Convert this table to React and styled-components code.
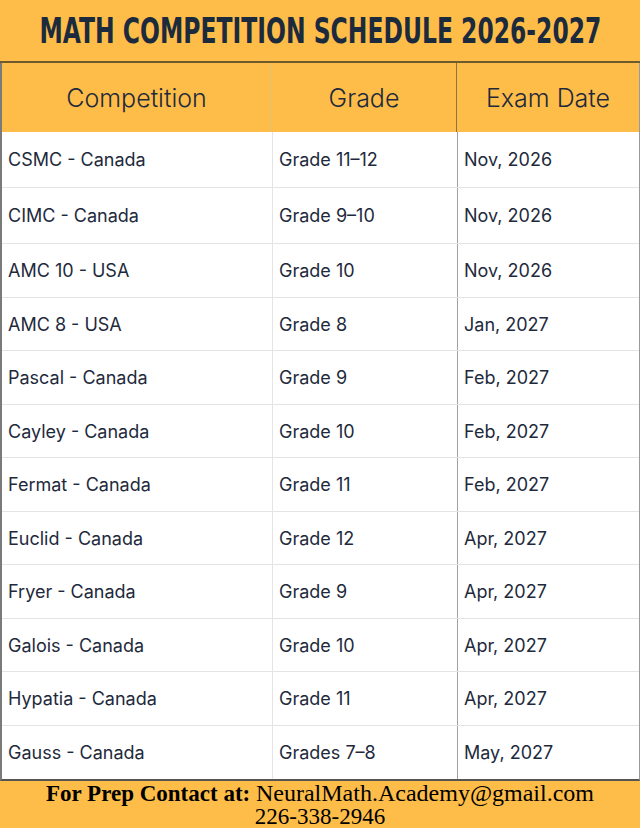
import React from 'react'
import styled, { createGlobalStyle } from 'styled-components'

const rows = [
    ['CSMC - Canada', 'Grade 11–12', 'Nov, 2026'],
    ['CIMC - Canada', 'Grade 9–10', 'Nov, 2026'],
    ['AMC 10 - USA', 'Grade 10', 'Nov, 2026'],
    ['AMC 8 - USA', 'Grade 8', 'Jan, 2027'],
    ['Pascal - Canada', 'Grade 9', 'Feb, 2027'],
    ['Cayley - Canada', 'Grade 10', 'Feb, 2027'],
    ['Fermat - Canada', 'Grade 11', 'Feb, 2027'],
    ['Euclid - Canada', 'Grade 12', 'Apr, 2027'],
    ['Fryer - Canada', 'Grade 9', 'Apr, 2027'],
    ['Galois - Canada', 'Grade 10', 'Apr, 2027'],
    ['Hypatia - Canada', 'Grade 11', 'Apr, 2027'],
    ['Gauss - Canada', 'Grades 7–8', 'May, 2027'],
]

export default function App() {
    return (
        <Page>
            <GlobalStyle />
            <TitleBar>
                <Title>Math Competition Schedule 2026-2027</Title>
            </TitleBar>
            <Table>
                <HeadRow>
                    <HeadCell>Competition</HeadCell>
                    <HeadCell>Grade</HeadCell>
                    <HeadCell>Exam Date</HeadCell>
                </HeadRow>
                {rows.map((r, i) => (
                    <Row key={i}>
                        <Cell>{r[0]}</Cell>
                        <Cell>{r[1]}</Cell>
                        <Cell $dark>{r[2]}</Cell>
                    </Row>
                ))}
            </Table>
            <Footer>
                <p><b>For Prep Contact at:</b> <Email>NeuralMath.Academy@gmail.com</Email></p>
                <p>226-338-2946</p>
            </Footer>
        </Page>
    )
}

const GlobalStyle = createGlobalStyle`
    body{
        margin: 0;
        background: #febd49;
    }
`
const Page = styled.div`
    width: 640px;
    height: 828px;
    background: #febd49;
    display: flex;
    flex-direction: column;
    overflow: hidden;
`
const TitleBar = styled.header`
    height: 63px;
    display: flex;
    align-items: center;
    justify-content: center;
    border-bottom: 2px solid #6e5a2c;
    box-sizing: border-box;
`
const Title = styled.h1`
    margin: 0;
    font-family: "DejaVu Sans", sans-serif;
    font-weight: 700;
    font-size: 35px;
    text-transform: uppercase;
    color: #1b2a3d;
    transform: scaleX(0.67);
    white-space: nowrap;
`
const Table = styled.div`
    display: flex;
    flex-direction: column;
    border-left: 2px solid #7a7a7a;
    border-right: 1px solid #9a9a9a;
    border-bottom: 2px solid #555;
`
const HeadRow = styled.div`
    display: grid;
    grid-template-columns: 270px 185px 1fr;
    height: 69px;
    background: #febd49;
`
const HeadCell = styled.div`
    display: flex;
    align-items: center;
    justify-content: center;
    font-family: "Inter", sans-serif;
    font-weight: 350;
    font-size: 25px;
    color: #1e2a3c;
    border-right: 1px solid #e3c27a;
    &:nth-child(2){
        border-right-color: #8a7440;
    }
    &:last-child{
        border-right: 0;
    }
`
const Row = styled.div`
    display: grid;
    grid-template-columns: 270px 185px 1fr;
    height: 53px;
    background: #fff;
    border-bottom: 1px solid #e4e4e4;
    box-sizing: border-box;
    &:nth-child(even){
        height: 54px;
    }
    &:nth-child(2), &:nth-child(3){
        height: 56px;
    }
    &:last-child{
        border-bottom: 0;
    }
`
const Cell = styled.div`
    display: flex;
    align-items: center;
    padding-left: 6px;
    font-family: "Inter", sans-serif;
    font-weight: 400;
    font-size: 18px;
    color: #1e2a3c;
    border-left: 1px solid ${p => (p.$dark ? '#a0a0a0' : '#e4e4e4')};
    &:first-child{
        border-left: 0;
    }
`
const Footer = styled.footer`
    flex: 1;
    display: flex;
    flex-direction: column;
    align-items: center;
    justify-content: center;
    font-family: "Liberation Serif", serif;
    font-size: 23px;
    color: #000;
    line-height: 23px;

    & p{
        margin: 0;
        white-space: nowrap;
    }
`
const Email = styled.span`
    font-size: 24px;
`
